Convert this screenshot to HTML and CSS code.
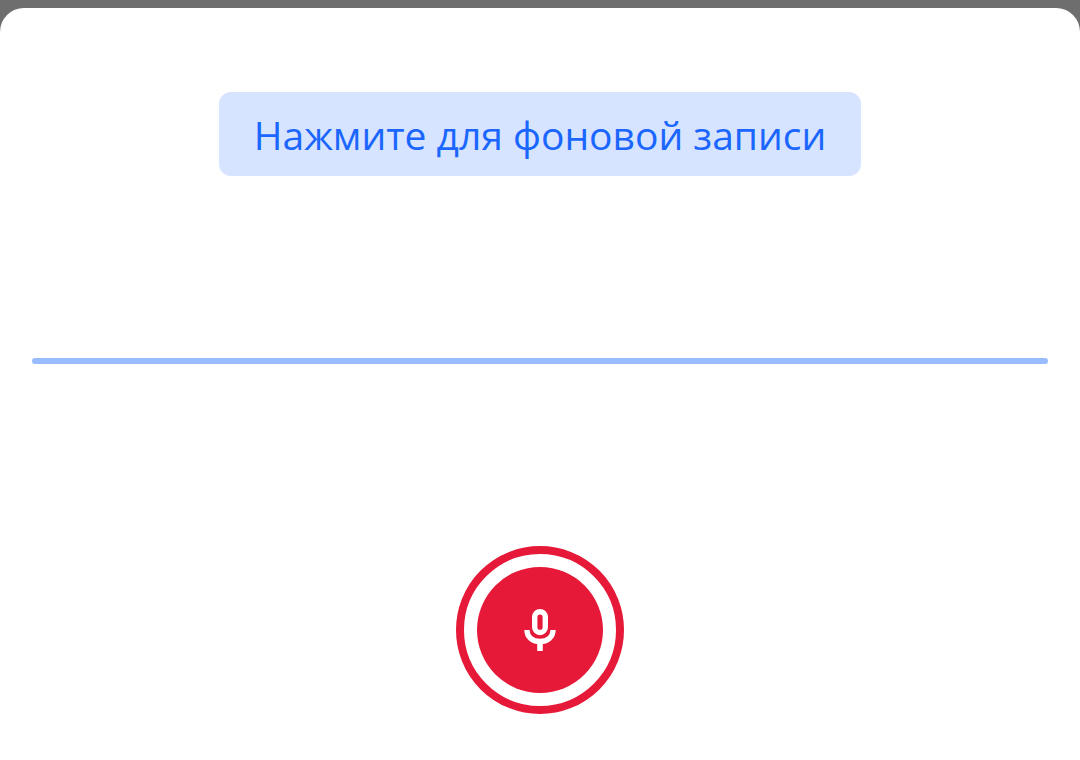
FILE: index.html
```html
<!DOCTYPE html>
<html lang="ru">
<head>
<meta charset="utf-8">
<meta name="viewport" content="width=device-width, initial-scale=1">
<title>Запись</title>
<link rel="stylesheet" href="styles.css">
</head>
<body>
<main class="sheet">
  <button class="background-record" type="button">Нажмите для фоновой записи</button>
  <div class="level" role="img" aria-label="Уровень звука"></div>
  <button class="record" type="button" aria-label="Начать запись">
    <span class="record-core">
      <svg class="mic" viewBox="0 0 32 42" aria-hidden="true">
        <rect x="10.700" y="2.700" width="10.600" height="20.800" rx="5.300" fill="none" stroke="currentColor" stroke-width="5.400"/>
        <path d="M3 21c0 7.500 6 11.500 13 11.500s13-4 13-11.500" fill="none" stroke="currentColor" stroke-width="5.400"/>
        <path d="M13.200 33h5.600v9h-5.600z" fill="currentColor"/>
      </svg>
    </span>
  </button>
</main>
</body>
</html>
```
FILE: styles.css
```css
* {
  box-sizing: border-box;
}

body {
  margin: 0;
  padding-top: 8px;
  min-height: 100vh;
  display: flex;
  background: #6e6e6e;
  font-family: "Open Sans", "Noto Sans", sans-serif;
}

.sheet {
  flex: 1;
  display: flex;
  flex-direction: column;
  align-items: center;
  justify-content: space-between;
  padding: 84px 32px 46px;
  border-radius: 24px 24px 0 0;
  background: #fff;
}

.background-record {
  padding: 17px 35px 15px;
  border: 0;
  border-radius: 12px;
  background: #d6e4ff;
  color: #1a66ff;
  font: 400 39px/52px "Open Sans", "Noto Sans", sans-serif;
}

.level {
  width: 100%;
  height: 6px;
  border-radius: 3px;
  background: #99bbff;
}

.record {
  padding: 13px;
  border: 8px solid #e61938;
  border-radius: 50%;
  background: #fff;
}

.record-core {
  display: flex;
  align-items: center;
  justify-content: center;
  width: 126px;
  height: 126px;
  border-radius: 50%;
  background: #e61938;
  color: #fff;
}

.mic {
  width: 32px;
  height: 42px;
}
```
